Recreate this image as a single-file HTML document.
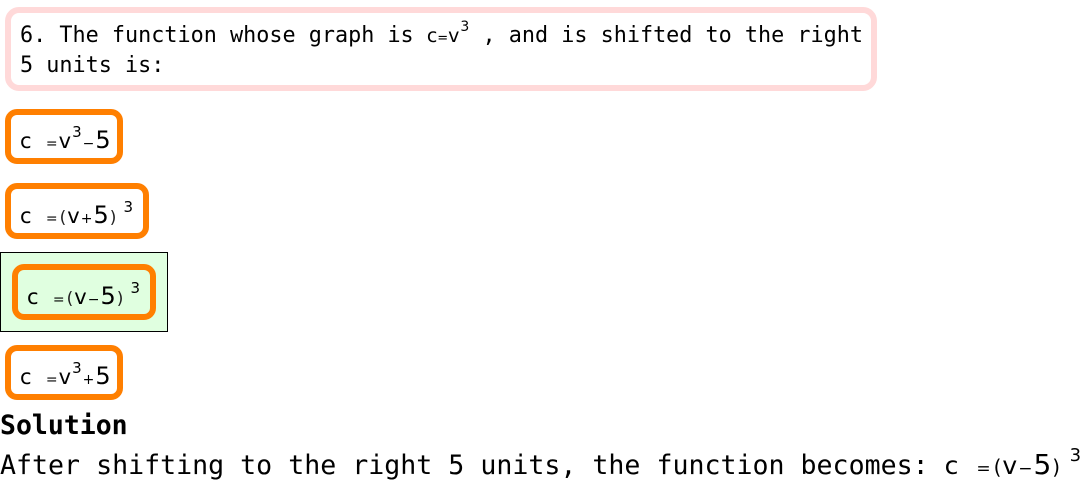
<!DOCTYPE html>
<html><head><meta charset="utf-8"><style>
body{margin:0;width:1084px;height:481px;background:#fff;position:relative;overflow:hidden;font-family:"DejaVu Sans Mono","Liberation Mono",monospace;color:#000}
.q{position:absolute;left:5px;top:7px;border:6px solid #ffd9d9;border-radius:14px;box-sizing:border-box;width:872px;height:84px}
.qt{position:absolute;left:20px;top:22px;font-size:21.8px;line-height:27px;white-space:pre}
.opt{position:absolute;border:6px solid #ff7f00;border-radius:12px;box-sizing:border-box;background:#fff}
.m{position:absolute;font-family:"DejaVu Sans",sans-serif;white-space:nowrap;line-height:30px}
.c{font-size:21px}
.s{font-size:14px;margin:0 1px}
.b{font-size:24px}
.p{font-size:17px;color:#222;margin:0 1px}
.sup{font-size:15px;position:relative;top:-11px;margin-left:1px}
.green{position:absolute;left:0;top:252px;width:168px;height:80px;box-sizing:border-box;border:1px solid #000;background:#e0ffe0}
</style></head><body>
<div class="q"></div>
<div class="qt">6. The function whose graph is <span style="font-family:'DejaVu Sans',sans-serif;font-size:19px">c<span style="font-size:13px">=</span>v<span class="sup" style="font-size:14px">3</span></span> , and is shifted to the right
5 units is:</div>

<div class="opt" style="left:5px;top:109px;width:118px;height:55px"></div>
<div class="m" style="left:20px;top:125px"><span class="c">c&nbsp;&nbsp;</span><span class="s">=</span><span class="c">v</span><span class="sup">3</span><span class="s">−</span><span class="b">5</span></div>

<div class="opt" style="left:5px;top:183px;width:144px;height:56px"></div>
<div class="m" style="left:20px;top:200px"><span class="c">c&nbsp;&nbsp;</span><span class="s">=</span><span class="p">(</span><span class="c">v</span><span class="s">+</span><span class="b">5</span><span class="p">)</span> <span class="sup">3</span></div>

<div class="green"></div>
<div class="opt" style="left:12px;top:264px;width:144px;height:56px;background:#e0ffe0"></div>
<div class="m" style="left:27px;top:281px"><span class="c">c&nbsp;&nbsp;</span><span class="s">=</span><span class="p">(</span><span class="c">v</span><span class="s">−</span><span class="b">5</span><span class="p">)</span> <span class="sup">3</span></div>

<div class="opt" style="left:5px;top:345px;width:118px;height:55px"></div>
<div class="m" style="left:20px;top:361px"><span class="c">c&nbsp;&nbsp;</span><span class="s">=</span><span class="c">v</span><span class="sup">3</span><span class="s">+</span><span class="b">5</span></div>

<div style="position:absolute;left:0;top:409px;font-size:26.5px;font-weight:bold;line-height:34px">Solution</div>
<div style="position:absolute;left:0;top:447px;font-size:26.6px;line-height:36px;white-space:pre">After shifting to the right 5 units, the function becomes: <span style="font-family:'DejaVu Sans',sans-serif"><span style="font-size:25px">c&nbsp;</span><span style="font-size:17px;margin:0 2px 0 10px">=</span><span style="font-size:20px;margin:0 1px">(</span><span style="font-size:25px">v</span><span style="font-size:17px;margin:0 1px">−</span><span style="font-size:28px">5</span><span style="font-size:20px;margin:0 1px">)</span> <span style="font-size:18px;position:relative;top:-13px">3</span></span></div>
</body></html>
